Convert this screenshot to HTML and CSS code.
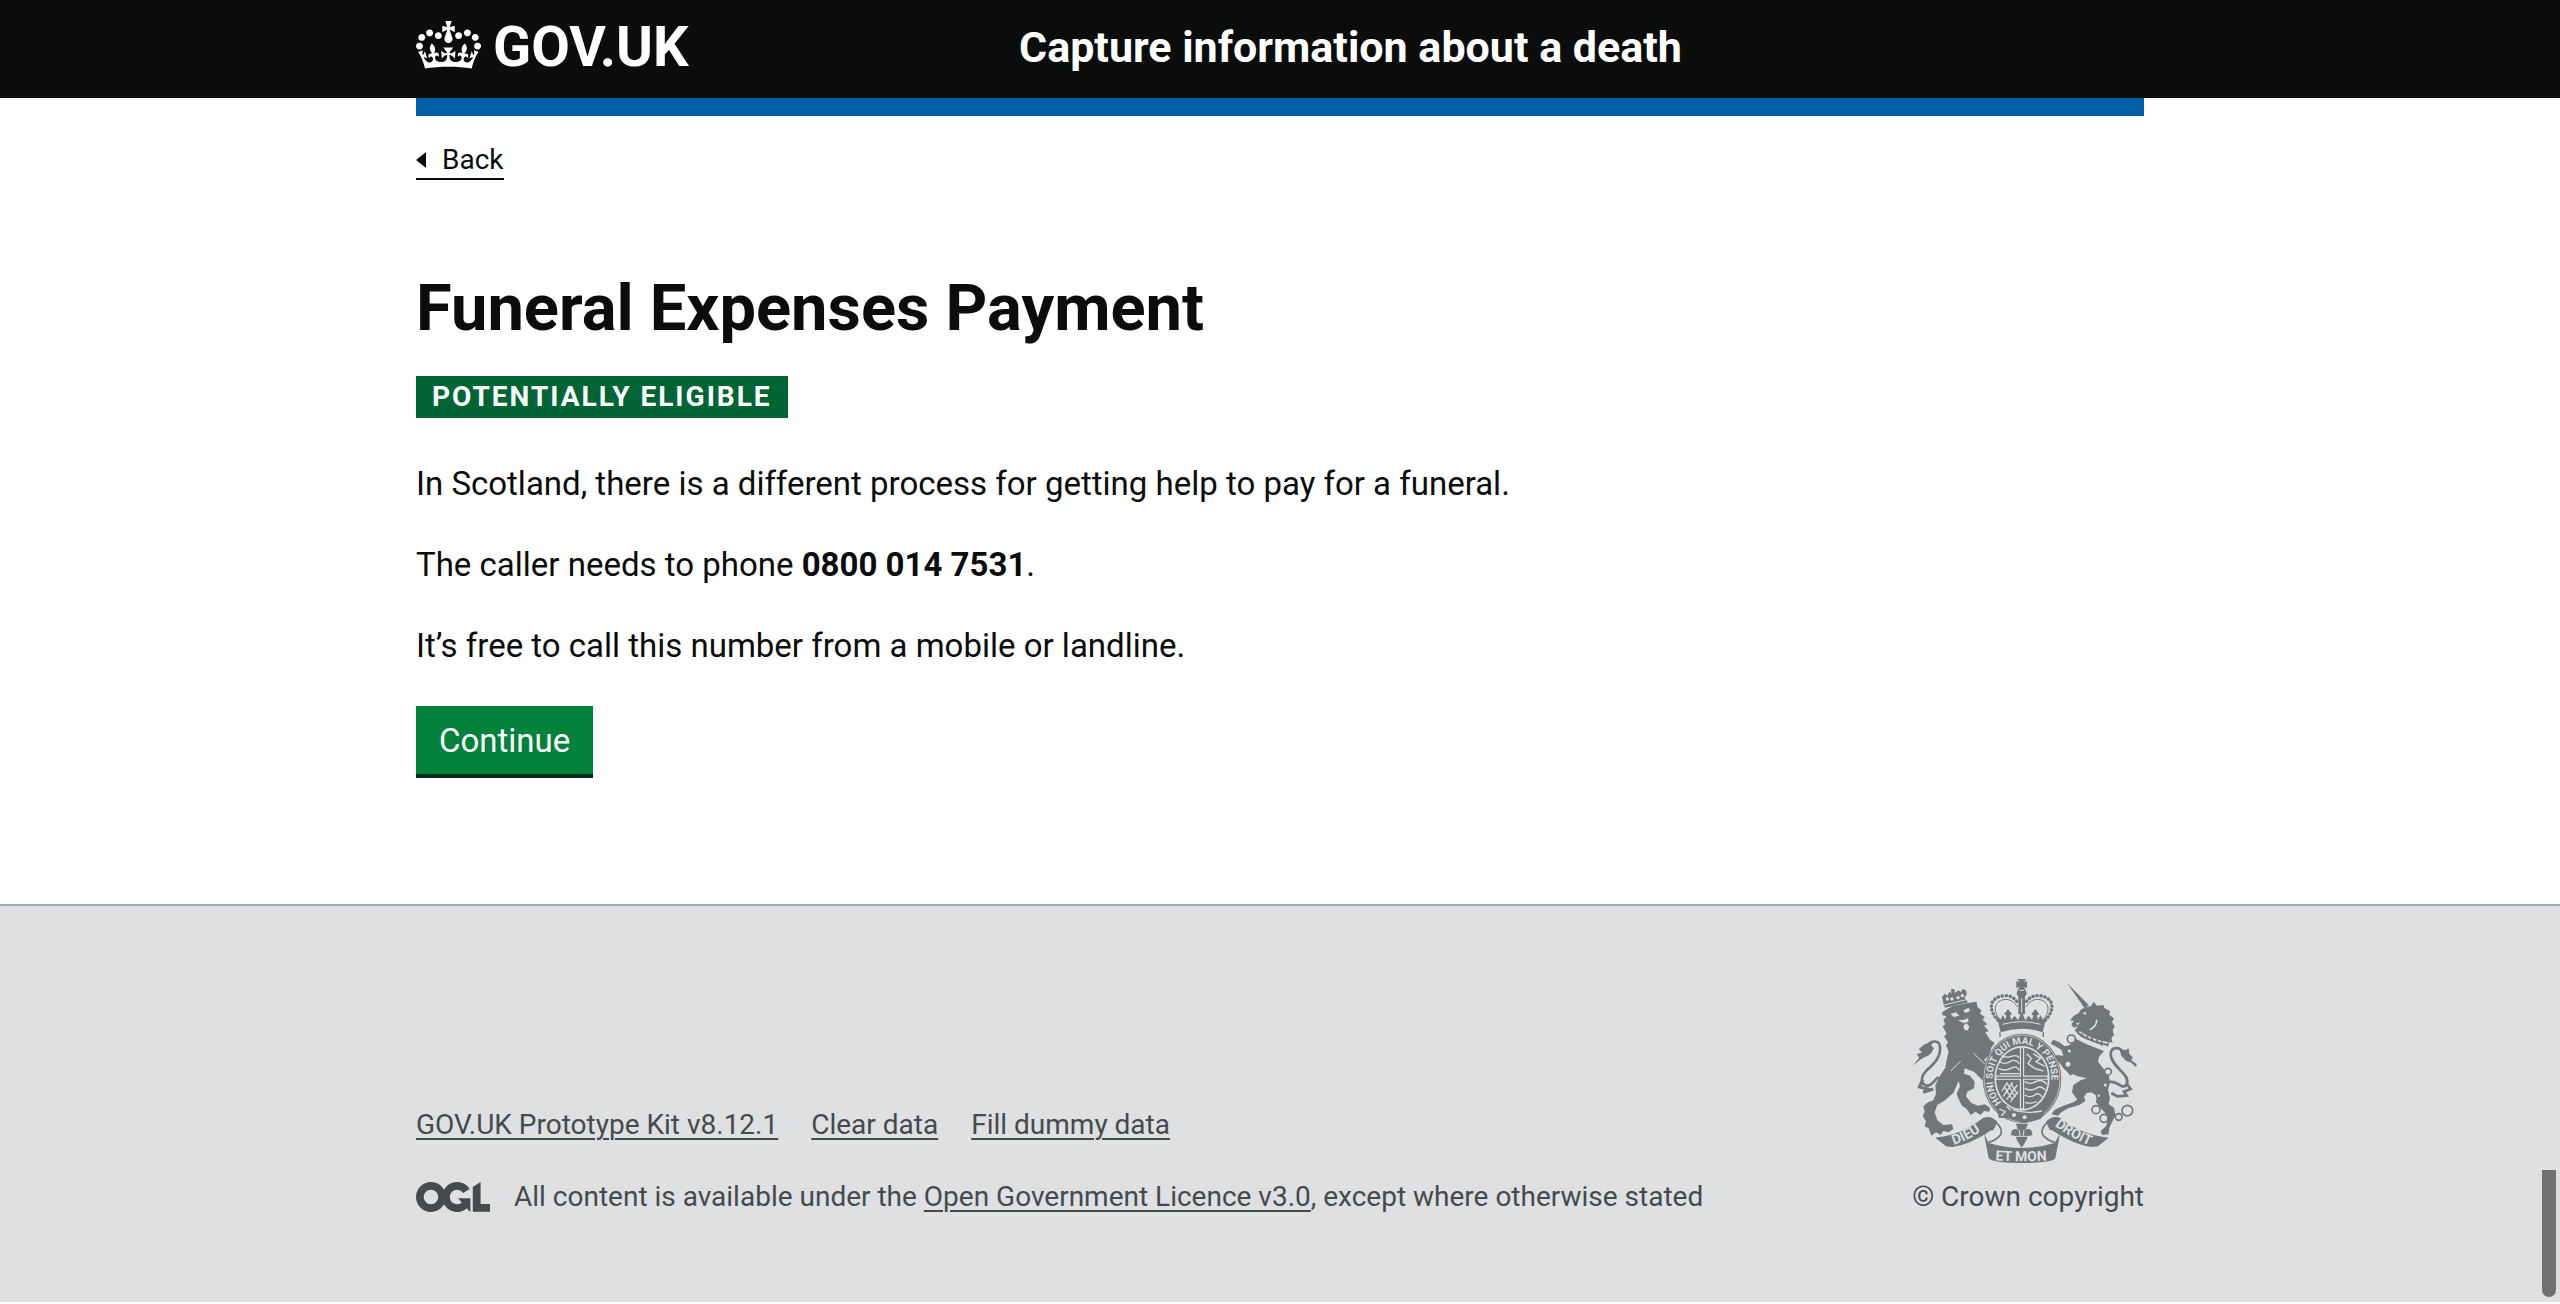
FILE: index.html
```html
<!DOCTYPE html>
<html lang="en">
<head>
<meta charset="utf-8">
<meta name="viewport" content="width=device-width, initial-scale=1">
<title>Funeral Expenses Payment</title>
<link rel="stylesheet" href="styles.css">
</head>
<body>
<header class="header">
  <div class="container header-inner">
    <a class="logo" href="#">
      <svg class="crown" viewBox="0 0 132 97" aria-hidden="true"><path fill="currentColor" fill-rule="evenodd" d="M25 30.2c3.5 1.5 7.7-.2 9.1-3.7 1.5-3.6-.2-7.8-3.9-9.2-3.6-1.4-7.6.3-9.1 3.9-1.4 3.5.3 7.5 3.9 9zM9 39.5c3.6 1.5 7.8-.2 9.2-3.7 1.5-3.6-.2-7.8-3.9-9.1-3.6-1.5-7.6.2-9.1 3.8-1.4 3.5.3 7.5 3.8 9zM4.4 57.2c3.5 1.5 7.7-.2 9.1-3.8 1.5-3.6-.2-7.7-3.9-9.1-3.5-1.5-7.6.3-9.1 3.8-1.4 3.5.3 7.6 3.9 9.1zm38.3-21.4c3.5 1.5 7.7-.2 9.1-3.8 1.5-3.6-.2-7.7-3.9-9.1-3.6-1.5-7.6.3-9.1 3.8-1.3 3.6.4 7.7 3.9 9.1zm64.4-5.6c-3.6 1.5-7.8-.2-9.1-3.7-1.5-3.6.2-7.8 3.8-9.2 3.6-1.4 7.7.3 9.2 3.9 1.3 3.5-.4 7.5-3.9 9zm15.9 9.3c-3.6 1.5-7.7-.2-9.1-3.7-1.5-3.6.2-7.8 3.7-9.1 3.6-1.5 7.7.2 9.2 3.8 1.5 3.5-.3 7.5-3.8 9zm4.7 17.7c-3.6 1.5-7.8-.2-9.2-3.8-1.5-3.6.2-7.7 3.9-9.1 3.6-1.5 7.7.3 9.2 3.8 1.3 3.5-.4 7.6-3.9 9.1zM89.3 35.8c-3.6 1.5-7.8-.2-9.2-3.8-1.4-3.6.2-7.7 3.9-9.1 3.6-1.5 7.7.3 9.2 3.8 1.4 3.6-.3 7.7-3.9 9.1zM69.7 17.7l8.9 4.7V9.3l-8.9 2.8c-.2-.3-.5-.6-.9-.9L72.4 0H59.6l3.5 11.2c-.3.3-.6.5-.9.9l-8.8-2.8v13.1l8.8-4.7c.3.3.6.7.9.9l-5 15.4v.1c-.2.8-.4 1.6-.4 2.4 0 4.1 3.1 7.5 7 8.1h.2c.3 0 .7.1 1 .1.4 0 .7 0 1-.1h.2c4-.6 7.1-4.1 7.1-8.1 0-.8-.1-1.7-.4-2.4V34l-5.1-15.4c.4-.2.7-.6 1-.9zM66 92.8c16.9 0 32.8 1.1 47.1 3.2 4-16.9 8.9-26.7 14-33.5l-9.6-3.4c1 4.9 1.1 7.2 0 10.2-1.5-1.4-3-4.3-4.2-8.7L108.6 76c2.8-2 5-3.2 7.5-3.3-4.4 9.4-10 11.9-13.6 11.2-4.3-.8-6.3-4.6-5.6-7.9 1-4.7 5.7-5.9 8-.5 4.3-8.7-3-11.4-7.6-8.8 7.1-7.2 7.9-13.5 2.1-21.1-8 6.1-8.1 12.3-4.5 20.8-4.7-5.4-12.1-2.5-9.5 6.2 3.4-5.2 7.9-2 7.2 3.1-.6 4.3-6.4 7.8-13.5 7.2-10.3-.9-10.9-8-11.2-13.8 2.5-.5 7.1 1.8 11 7.3L80.2 60c-4.1 4.4-8 5.3-12.3 5.4 1.4-4.4 8-11.6 8-11.6H55.5s6.4 7.2 7.9 11.6c-4.2-.1-8-1-12.3-5.4l1.4 16.4c3.9-5.5 8.5-7.7 10.9-7.3-.3 5.8-.9 12.8-11.1 13.8-7.2.6-12.9-2.9-13.5-7.2-.7-5 3.8-8.3 7.1-3.1 2.7-8.7-4.6-11.6-9.4-6.2 3.7-8.5 3.6-14.7-4.6-20.8-5.8 7.6-5 13.9 2.2 21.1-4.7-2.6-11.9.1-7.7 8.8 2.3-5.5 7.1-4.2 8.1.5.7 3.3-1.3 7.1-5.7 7.9-3.5.7-9-1.8-13.5-11.2 2.5.1 4.7 1.3 7.5 3.3l-4.7-15.4c-1.2 4.4-2.7 7.2-4.3 8.7-1.1-3-.9-5.3 0-10.2l-9.5 3.4c5 6.9 9.9 16.7 14 33.5 14.8-2.1 30.8-3.2 47.7-3.2z"/></svg>
      <span>GOV.UK</span>
    </a>
    <a class="service" href="#">Capture information about a death</a>
  </div>
</header>
<div class="container page">
  <div class="bar"></div>
  <a class="back" href="#">Back</a>
  <main class="main">
    <h1 class="title">Funeral Expenses Payment</h1>
    <strong class="tag">Potentially eligible</strong>
    <p class="body">In Scotland, there is a different process for getting help to pay for a funeral.</p>
    <p class="body">The caller needs to phone <strong>0800 014 7531</strong>.</p>
    <p class="body">It’s free to call this number from a mobile or landline.</p>
    <button class="button" type="button">Continue</button>
  </main>
</div>
<footer class="footer">
  <div class="container footer-inner">
    <div class="meta">
      <nav class="links" aria-label="Support links">
        <a href="#">GOV.UK Prototype Kit v8.12.1</a>
        <a href="#">Clear data</a>
        <a href="#">Fill dummy data</a>
      </nav>
      <div class="licence">
        <svg class="ogl" viewBox="0 0 483.2 195.7" aria-hidden="true"><path fill="currentColor" d="M421.5 142.8V.1l-50.7 32.3v161.1h112.4v-50.7zm-122.3-9.6A47.12 47.12 0 0 1 221 97.8c0-26 21.1-47.1 47.1-47.1 16.7 0 31.4 8.7 39.7 21.8l42.7-27.2A97.63 97.63 0 0 0 268.1 0c-36.5 0-68.3 20.1-85.1 49.7A98 98 0 0 0 97.8 0C43.9 0 0 43.9 0 97.8s43.9 97.8 97.8 97.8c36.5 0 68.3-20.1 85.1-49.7a97.76 97.76 0 0 0 149.6 25.4l19.4 22.2h3v-87.8h-80l24.3 27.5zM97.8 145c-26 0-47.1-21.1-47.1-47.1s21.1-47.1 47.1-47.1 47.1 21.1 47.1 47.1S123.8 145 97.8 145"/></svg>
        <p>All content is available under the <a href="#">Open Government Licence v3.0</a>, except where otherwise stated</p>
      </div>
    </div>
    <a class="copyright" href="#">
      <svg class="arms" viewBox="102 48 684 564" aria-hidden="true">
        <defs>
          <path id="garter" d="M370 425A88 103 0 1 1 494 425"/>
          <path id="dieu" d="M228 552Q280 534 328 496"/>
          <path id="mon" d="M352 598Q431 604 516 598"/>
          <path id="droit" d="M530 494Q572 528 640 556"/>
        </defs>
        <!-- lion -->
        <g class="ink">
          <path d="M194 152L222 136L268 126L296 122L298 138L310 148L306 158L320 168L314 176L328 190L318 194L332 210L322 214L336 236L350 246L340 260L334 282L318 296L336 322L352 348L338 346L344 366L326 350L328 374L312 356L288 332L260 322L258 338L276 344L290 362L288 382L268 392L264 406L280 426L300 434L320 430L336 440L334 452L318 450L308 462L292 452L278 462L266 444L252 434L240 410L236 398L246 376L242 360L226 396L198 420L178 432L170 454L178 478L196 492L222 490L226 504L212 514L196 510L188 522L174 514L160 524L152 502L140 496L144 480L134 466L140 452L136 436L150 424L166 418L174 398L172 372L186 344L202 320L206 296L212 272L204 252L210 244L198 226L206 218L194 196L202 190L196 176L206 166L192 162Z"/>
          <path d="M198 134L192 108L200 98L208 104L214 92L220 98L219 84L229 84L230 96L242 88L248 94L254 84L264 88L266 100L260 110L270 124L202 140Z"/>
          <path d="M104 314L124 290L116 280L132 274L122 264L140 250L162 242L160 254L168 262L160 276L150 284L136 290L122 300Z"/>
        </g>
        <g class="line">
          <path stroke-width="8" d="M150 252C160 238 184 236 186 258C190 288 166 310 146 328C126 348 128 370 146 374C160 376 164 362 182 348"/>
          <path stroke-width="9" d="M134 356L124 378L150 384L136 394L166 384"/>
        </g>
        <g class="gap"><path d="M218 158L234 154L244 164L226 168ZM256 148L272 140L276 150L262 156ZM240 178L258 176L270 172L272 182L256 186ZM256 196L264 186L274 196L270 208L260 208Z"/>
          <circle cx="208" cy="114" r="5"/><circle cx="222" cy="114" r="5"/><circle cx="240" cy="110" r="5"/><circle cx="253" cy="104" r="5"/></g>
        <path class="cut" stroke-width="3" d="M198 132L266 116M218 330L248 300M286 276L336 324"/>
        <!-- unicorn -->
        <g class="ink">
          <path d="M567 66L632 132L620 142Z"/>
          <path d="M608 146L624 138L638 136L648 122L656 134L676 132L680 142L696 150L694 162L708 172L702 184L710 196L704 208L708 222L700 232L704 246L694 242L690 258L676 250L650 244L622 234L600 220L590 208L600 196L586 200L580 190L588 180L576 178L588 164L602 156Z"/>
          <path d="M594 234L626 250L678 270L664 286L660 302L674 320L692 342L696 364L690 386L696 412L692 430L708 440L712 462L704 480L694 500L692 520L672 522L668 510L684 496L690 474L682 456L668 442L654 424L656 404L640 394L626 396L618 408L622 420L604 432L570 442L550 454L540 464L520 460L530 446L556 434L586 424L598 416L582 394L586 372L608 358L626 352L600 346L574 336L560 326L548 310L532 290L536 282L556 284L550 266L530 254L518 248L526 236L544 244L560 256L576 252L582 240Z"/>
          <path d="M774 318L758 304L744 300L730 284L724 264L742 268L752 262L754 280L764 288L760 298L776 310Z"/>
        </g>
        <g class="line">
          <path stroke-width="8" d="M738 276C724 254 698 258 698 280C698 304 724 322 740 342C754 358 748 378 734 376C722 374 718 362 696 362"/>
          <path stroke-width="8" d="M744 366L758 384L738 392L746 404L718 406L700 396M550 296L580 310L566 324L580 342"/>
        </g>
        <g class="ring">
          <circle cx="580" cy="234" r="12"/><circle cx="574" cy="270" r="7"/><circle cx="570" cy="310" r="10"/>
          <circle cx="690" cy="332" r="10"/><circle cx="682" cy="372" r="7"/><circle cx="662" cy="404" r="6"/>
          <circle cx="654" cy="446" r="12"/><circle cx="678" cy="472" r="12"/><circle cx="722" cy="468" r="10"/><circle cx="748" cy="449" r="16"/>
        </g>
        <path class="cut" stroke-width="5" d="M604 212Q638 238 690 246M600 230Q640 256 678 264M636 206Q656 196 656 176"/>
        <path class="ink" d="M606 226L612 214L620 232L628 222L634 238L642 228L650 246L658 234L664 250L672 238L676 256Z"/>
        <path class="gap" d="M614 156L626 152L622 162ZM592 188L606 184L600 192Z"/>
        <!-- royal crown -->
        <path class="ink" d="M418 54H444L438 64L447 60V82L438 77L442 86Q450 98 441 106V160H421V106Q412 98 420 86L424 77L415 82V60L424 64Z"/>
        <path class="cut" stroke-width="3" d="M424 88H438M431 112V156"/>
        <path class="line dotted" stroke-width="10" d="M360 178C330 146 334 112 372 105C398 100 414 114 420 128M502 178C532 146 528 112 490 105C464 100 448 114 442 128"/>
        <g class="line"><path stroke-width="3" d="M366 176C344 150 348 122 376 116C396 112 410 124 418 138M496 176C518 150 514 122 486 116C466 112 452 124 444 138"/></g>
        <path class="ink" d="M356 166L368 176L374 162L382 176L390 146L400 176L410 164L420 178L431 152L442 178L452 164L462 176L472 146L480 176L488 162L494 176L506 166L494 214Q431 192 368 214Z"/>
        <path class="ink" d="M378 160L390 144L402 160L390 166ZM460 160L472 144L484 160L472 166Z"/>
        <path class="cut" stroke-width="3" d="M374 190Q431 174 488 190"/>
        <path class="line" stroke-width="4" d="M366 214V228M496 214V228"/>
        <!-- garter and shield -->
        <ellipse class="ink" cx="432" cy="352" rx="118" ry="134"/>
        <ellipse class="cut" cx="432" cy="352" rx="114" ry="130" stroke-width="2"/>
        <ellipse class="gap" cx="432" cy="352" rx="83" ry="97"/>
        <ellipse class="ink" cx="432" cy="352" rx="78" ry="92"/>
        <path class="cut" stroke-width="4" d="M370 284Q384 292 400 286T424 290M364 302Q380 312 396 302T424 308M362 322Q380 332 398 322T424 328M366 338H424M440 362Q456 372 474 362T506 370M440 382Q458 392 474 382T502 388M440 402Q456 412 470 402T492 408M442 424Q456 430 476 422M446 278L460 292L450 308L470 322L496 330M466 278L488 292L474 302L500 316M378 376L402 414M388 368L412 408M398 366L418 400M372 390L388 364M376 406L404 364M386 416L418 372M398 422L420 392"/>
        <path class="cut" stroke-width="13" d="M432 260V444M354 350H510"/>
        <path class="line" stroke-width="6" d="M432 262V442M356 350H508"/>
        <path class="ink" d="M356 438L384 428L398 448L440 456L500 452L488 474L440 486L392 472L362 470Z"/>
        <path class="cut" stroke-width="4" d="M364 444L382 452L370 464M386 436L398 448M404 446Q440 460 492 450"/>
        <g class="gap"><circle cx="408" cy="462" r="6"/><circle cx="440" cy="469" r="6"/></g>
        <text class="motto small"><textPath href="#garter">HONI SOIT QUI MAL Y PENSE</textPath></text>
        <!-- ribbon -->
        <g class="ink">
          <path d="M172 530Q250 522 316 470Q340 462 358 482L350 500L332 512Q280 548 224 558L204 556Z"/>
          <path d="M692 530Q612 522 546 470Q522 462 504 482L512 500L530 512Q584 548 638 558L660 556Z"/>
          <path d="M318 518L332 546Q431 576 530 546L546 518L532 592Q520 606 431 606Q342 606 332 592Z"/>
          <path d="M414 488H450L442 508Q448 500 460 508L464 522L448 526L446 536L431 560L416 536L414 526L398 522L402 508Q414 500 420 508Z"/>
        </g>
        <path class="cut" stroke-width="3" d="M414 526H448M424 506L426 524M438 506L436 524"/>
        <g class="line"><path stroke-width="5" d="M354 484Q378 506 366 524Q350 540 332 544M320 520Q324 508 348 504M508 484Q484 506 496 524Q512 540 530 544M544 520Q540 508 514 504"/></g>
        <text class="motto"><textPath href="#dieu">DIEU</textPath></text>
        <text class="motto"><textPath href="#mon">ET MON</textPath></text>
        <text class="motto"><textPath href="#droit">DROIT</textPath></text>
      </svg>
      <span>© Crown copyright</span>
    </a>
  </div>
</footer>
<div class="thumb" aria-hidden="true"></div>
</body>
</html>
```
FILE: styles.css
```css
* { box-sizing: border-box; }
body {
  margin: 0;
  background: #fff;
  color: #0b0c0c;
  font-family: Roboto, "Liberation Sans", sans-serif;
  font-size: 33px;
  line-height: 45px;
}
a { color: inherit; }
p { margin: 0; }
.container {
  width: calc(100% - 64px);
  max-width: 1728px;
  margin: 0 auto;
}
.header { background: #0b0c0c; color: #fff; }
.header-inner {
  display: grid;
  grid-template-columns: 603px 1fr;
  align-items: center;
  min-height: 98px;
  padding-bottom: 4px;
}
.header a { text-decoration: none; font-weight: 700; }
.logo {
  display: flex;
  align-items: center;
  gap: 12px;
  font-size: 56px;
  line-height: 56px;
}
.crown { width: 65px; height: 48px; margin-bottom: 4px; }
.service { font-size: 43px; }
.page { display: flex; flex-direction: column; align-items: flex-start; }
.bar { width: 100%; height: 18px; background: #005ea5; }
.back {
  display: flex;
  align-items: center;
  gap: 16px;
  margin-top: 26px;
  border-bottom: 2px solid currentColor;
  font-size: 28px;
  line-height: 36px;
  text-decoration: none;
}
.back::before {
  content: "";
  border: solid transparent;
  border-width: 8px 10px 8px 0;
  border-right-color: currentColor;
}
.main {
  display: flex;
  flex-direction: column;
  align-items: flex-start;
  padding: 94px 0 130px;
}
.title { margin: 0; font-size: 65px; line-height: 68px; }
.tag {
  margin: 34px 0 43px;
  padding: 3px 16px;
  background: #006435;
  color: #fff;
  font-size: 28px;
  line-height: 36px;
  letter-spacing: 2px;
  text-transform: uppercase;
}
.body { margin-bottom: 36px; }
.button {
  margin-top: 2px;
  padding: 12px 23px 11px;
  border: 0;
  background: #00823b;
  box-shadow: 0 4px 0 #002d18;
  color: #fff;
  font: inherit;
}
.footer {
  padding: 71px 0 87px;
  border-top: 2px solid #a1acb2;
  background: #dee0e2;
  color: #454a4d;
  font-size: 28px;
  line-height: 36px;
}
.footer-inner { display: flex; align-items: flex-end; justify-content: space-between; }
.links { display: flex; gap: 33px; margin-bottom: 36px; }
.links a, .licence a { text-decoration-thickness: 2px; text-underline-offset: 4px; }
.licence { display: flex; align-items: center; gap: 24px; }
.ogl { width: 74px; height: 30px; }
.copyright {
  display: flex;
  flex-direction: column;
  align-items: flex-start;
  gap: 14px;
  text-decoration: none;
}
.arms { width: 228px; height: 188px; }
.ink { fill: #6f777b; }
.gap { fill: #dee0e2; }
.line { fill: none; stroke: #6f777b; }
.cut { fill: none; stroke: #dee0e2; }
.ring { fill: #dee0e2; stroke: #6f777b; stroke-width: 5; }
.dotted { stroke-dasharray: 1 11; stroke-linecap: round; }
.motto { fill: #dee0e2; font-size: 42px; font-weight: 700; }
.small { font-size: 29px; }
.thumb {
  position: fixed;
  right: 4px;
  bottom: 7px;
  width: 14px;
  height: 127px;
  border-radius: 0 0 7px 7px;
  background: #707173;
}
```
